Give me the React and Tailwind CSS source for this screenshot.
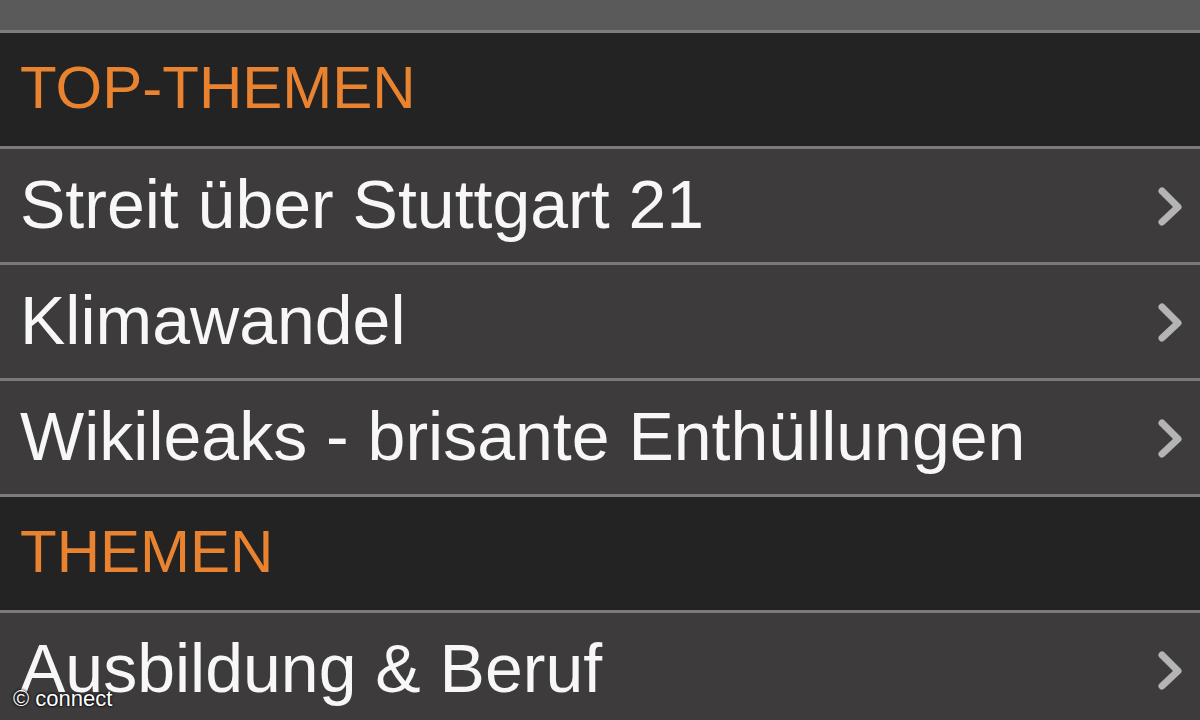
import React from "react";

const font = { fontFamily: '"Liberation Sans", Arial, sans-serif' };

function Chevron() {
  return (
    <svg width="30" height="40" viewBox="0 0 30 40" className="shrink-0">
      <polyline
        points="6,5 22,21 6,36"
        fill="none"
        stroke="#b4b4b4"
        strokeWidth="7"
        strokeLinecap="round"
        strokeLinejoin="round"
      />
    </svg>
  );
}

function Header({ children }) {
  return (
    <div className="border-t-[3px] border-[#7c7c7c] bg-[#242323] h-[116px] flex items-center pl-[20px]">
      <span className="text-[60px] leading-none text-[#ea8330] mt-[-4px]">{children}</span>
    </div>
  );
}

function Row({ children }) {
  return (
    <div className="border-t-[3px] border-[#7a7a7a] bg-[#3d3b3b] h-[116px] flex items-center justify-between pl-[20px] pr-[14px]">
      <span className="text-[68px] leading-none text-[#f7f7f7] whitespace-nowrap mt-[-4px]">{children}</span>
      <Chevron />
    </div>
  );
}

export default function App() {
  return (
    <div className="w-[1200px] h-[720px] overflow-hidden bg-[#3d3b3b] relative" style={font}>
      <div className="h-[30px] bg-[#5a5a5a]" />
      <Header>TOP-THEMEN</Header>
      <Row>Streit über Stuttgart 21</Row>
      <Row>Klimawandel</Row>
      <Row>Wikileaks - brisante Enthüllungen</Row>
      <Header>THEMEN</Header>
      <Row>Ausbildung &amp; Beruf</Row>
      <div
        className="absolute left-[13px] top-[688px] text-[22px] leading-none text-white"
        style={{ textShadow: "0 0 2px #000, 0 0 3px #000" }}
      >
        © connect
      </div>
    </div>
  );
}
